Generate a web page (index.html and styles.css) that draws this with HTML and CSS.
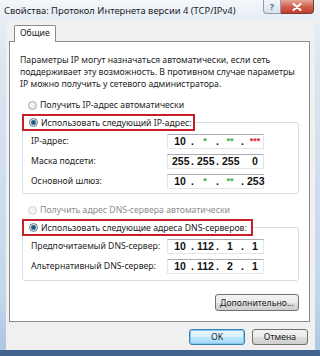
FILE: index.html
```html
<!DOCTYPE html>
<html lang="ru">
<head>
    <meta charset="UTF-8">
    <meta name="viewport" content="width=device-width, initial-scale=1.0">
    <title>Свойства: Протокол Интернета версии 4 (TCP/IPv4)</title>
    <link rel="stylesheet" href="styles.css">
</head>
<body>
    <div class="window">
        <div class="titlebar">
            <span class="title">Свойства: Протокол Интернета версии 4 (TCP/IPv4)</span>
            <div class="caption-btns">
                <span class="cap-btn help">?</span>
                <span class="cap-btn close">
                    <svg width="10" height="8" viewBox="0 0 10 8"><path d="M1.5 1 L8.5 7 M8.5 1 L1.5 7" stroke="#fff" stroke-width="2" stroke-linecap="round"/></svg>
                </span>
            </div>
        </div>

        <div class="client">
            <div class="tabs">
                <span class="tab">Общие</span>
            </div>
            <div class="panel">
                <p class="intro">Параметры IP могут назначаться автоматически, если сеть<br>поддерживает эту возможность. В противном случае параметры<br>IP можно получить у сетевого администратора.</p>

                <div class="radio-row first"><span class="radio"></span>Получить IP-адрес автоматически</div>
                <fieldset class="group">
                    <legend class="radio-row marked ip"><span class="radio checked"></span>Использовать следующий IP-адрес:</legend>
                    <div class="field-row">
                        <span class="label">IP-адрес:</span>
                        <div class="ip-box">
                            <span class="octet">10</span><span class="dot">.</span>
                            <span class="octet green">*</span><span class="dot">.</span>
                            <span class="octet green">**</span><span class="dot">.</span>
                            <span class="octet red">***</span>
                        </div>
                    </div>
                    <div class="field-row">
                        <span class="label">Маска подсети:</span>
                        <div class="ip-box">
                            <span class="octet">255</span><span class="dot">.</span>
                            <span class="octet">255</span><span class="dot">.</span>
                            <span class="octet">255</span><span class="dot"></span>
                            <span class="octet">0</span>
                        </div>
                    </div>
                    <div class="field-row">
                        <span class="label">Основной шлюз:</span>
                        <div class="ip-box">
                            <span class="octet">10</span><span class="dot">.</span>
                            <span class="octet green">*</span><span class="dot">.</span>
                            <span class="octet green">**</span><span class="dot">.</span>
                            <span class="octet">253</span>
                        </div>
                    </div>
                </fieldset>

                <div class="radio-row disabled"><span class="radio"></span>Получить адрес DNS-сервера автоматически</div>
                <fieldset class="group dns">
                    <legend class="radio-row marked dns"><span class="radio checked"></span>Использовать следующие адреса DNS-серверов:</legend>
                    <div class="field-row">
                        <span class="label">Предпочитаемый DNS-сервер:</span>
                        <div class="ip-box">
                            <span class="octet">10</span><span class="dot">.</span>
                            <span class="octet">112</span><span class="dot">.</span>
                            <span class="octet">1</span><span class="dot">.</span>
                            <span class="octet">1</span>
                        </div>
                    </div>
                    <div class="field-row">
                        <span class="label">Альтернативный DNS-сервер:</span>
                        <div class="ip-box">
                            <span class="octet">10</span><span class="dot">.</span>
                            <span class="octet">112</span><span class="dot">.</span>
                            <span class="octet">2</span><span class="dot">.</span>
                            <span class="octet">1</span>
                        </div>
                    </div>
                </fieldset>

                <div class="panel-actions">
                    <button class="btn wide">Дополнительно...</button>
                </div>
            </div>

            <div class="dialog-actions">
                <button class="btn default">OK</button>
                <button class="btn">Отмена</button>
            </div>
        </div>
    </div>
</body>
</html>
```

FILE: styles.css
```css
* {
    box-sizing: border-box;
    margin: 0;
    padding: 0;
}

body {
    width: 320px;
    height: 356px;
    overflow: hidden;
    font-family: "Noto Sans", "Open Sans", sans-serif;
    font-size: 8.7px;
    color: #1c1c1c;
    background: linear-gradient(to bottom, #eef3f8 0px, #dbe6f1 60px, #c3d6ea 300px, #afc7e2 345px);
}

.window {
    display: flex;
    flex-direction: column;
    height: 356px;
    border-bottom: 6px solid #3f628e;
}

/* заголовок окна */
.titlebar {
    height: 20px;
    display: flex;
    align-items: flex-start;
    padding-left: 4px;
    background: linear-gradient(to bottom, #f4f7fb, #e6edf5);
}

.title {
    font-size: 9.4px;
    line-height: 21px;
    color: #1e1e1e;
    white-space: nowrap;
}

.caption-btns {
    display: flex;
    margin-left: auto;
    margin-right: 6px;
}

.cap-btn {
    display: flex;
    align-items: center;
    justify-content: center;
    height: 14px;
    border: 1px solid #8d9db2;
    border-top: none;
}

.help {
    width: 18px;
    border-radius: 0 0 0 4px;
    background: linear-gradient(to bottom, #f3f6fa, #d9e1ea);
    color: #5a6f8c;
    font-size: 9px;
    font-weight: bold;
}

.close {
    width: 33px;
    border-color: #7b3a33;
    border-left: none;
    border-radius: 0 0 4px 0;
    background: linear-gradient(to bottom, #e6a799, #d0604f 50%, #c5402f);
}

/* клиентская область */
.client {
    flex: 1;
    margin: 0 5px 0 6px;
    padding: 5px 5px 0 3px;
    background: #f0f0f0;
}

.tabs {
    display: flex;
    padding-left: 5px;
}

.tab {
    position: relative;
    z-index: 1;
    height: 17px;
    margin-bottom: -1px;
    padding: 0 5px;
    line-height: 15px;
    background: #fff;
    border: 1px solid #898c95;
    border-bottom: none;
    border-radius: 2px 2px 0 0;
}

.panel {
    background: #fff;
    border: 1px solid #898c95;
    padding: 12px 10px 10px 12px;
}

.intro {
    line-height: 12px;
    margin-left: -2px;
    white-space: nowrap;
}

.radio-row {
    display: flex;
    align-items: center;
    height: 16px;
    margin-top: 8px;
    padding-left: 6px;
    white-space: nowrap;
}

.radio-row.first {
    margin-top: 7px;
}

.radio-row.disabled {
    color: #8e8e8e;
}

.radio {
    width: 9px;
    height: 9px;
    margin-right: 3px;
    border-radius: 50%;
    border: 1px solid #a4a9b0;
    background: radial-gradient(circle at 40% 35%, #fbfbfb, #d9dde2);
}

.radio.checked {
    border-color: #6b7a88;
    background: radial-gradient(circle, #17486d 0, #2b6e99 2px, #dfe6ec 3px, #f4f6f8 4px);
}

.disabled .radio {
    border-color: #cfd2d6;
    background: #f3f3f3;
}

.group {
    margin-top: 1px;
    border: 1px solid #d5dfe5;
    border-radius: 3px;
    padding: 0 0 2px 8px;
}

.group.dns {
    padding-bottom: 4px;
}

.marked {
    margin: 0 0 0 -9px;
    height: 17px;
    padding: 0 0 0 5px;
    border: 2px solid #c8202b;
    background: #fff;
}

.marked.ip {
    width: 173px;
}

.marked.dns {
    width: 231px;
}

.field-row {
    display: flex;
    align-items: center;
    height: 20px;
}

.label {
    width: 136px;
    white-space: nowrap;
}

.ip-box {
    display: flex;
    align-items: center;
    width: 97px;
    height: 15px;
    padding-left: 4px;
    border: 1px solid #e2e6ec;
    border-top-color: #abadb3;
    font-family: "Liberation Sans", Arial, sans-serif;
    font-size: 10.5px;
    font-weight: bold;
    color: #111;
}

.octet {
    width: 16px;
    text-align: center;
}

.dot {
    width: 9px;
    text-align: center;
}

.green {
    color: #35b13a;
    font-size: 9px;
}

.red {
    color: #e0242a;
    font-size: 9px;
}

.panel-actions {
    display: flex;
    justify-content: flex-end;
    margin-top: 13px;
}

.btn {
    height: 17px;
    font-family: inherit;
    font-size: 8.7px;
    color: #1c1c1c;
    border: 1px solid #707070;
    border-radius: 3px;
    background: linear-gradient(to bottom, #f2f2f2 0%, #ebebeb 50%, #dddddd 51%, #cfcfcf 100%);
}

.btn.wide {
    width: 84px;
}

.dialog-actions {
    display: flex;
    justify-content: flex-end;
    gap: 7px;
    margin-top: 7px;
    margin-right: 2px;
}

.dialog-actions .btn {
    width: 56px;
    height: 16px;
}

.btn.default {
    border-color: #3c7fb1;
    box-shadow: inset 0 0 0 1px #7ecaf0;
    background: linear-gradient(to bottom, #eaf6fd 0%, #d9f0fc 50%, #bee6fd 51%, #a7d9f5 100%);
}
```
